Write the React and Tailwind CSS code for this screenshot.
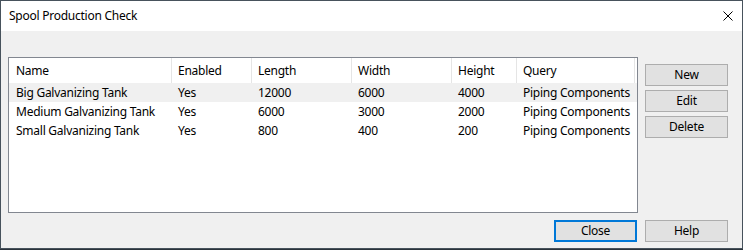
import React from 'react'

const columns = [
  { key: 'name', label: 'Name', width: 'w-[163px]', pad: 'pl-[7px]' },
  { key: 'enabled', label: 'Enabled', width: 'w-[80px]', pad: 'pl-[6px]' },
  { key: 'length', label: 'Length', width: 'w-[100px]', pad: 'pl-[6px]' },
  { key: 'width', label: 'Width', width: 'w-[100px]', pad: 'pl-[6px]' },
  { key: 'height', label: 'Height', width: 'w-[65px]', pad: 'pl-[6px]' },
  { key: 'query', label: 'Query', width: 'w-[118px]', pad: 'pl-[6px]' },
]

const rows = [
  { name: 'Big Galvanizing Tank', enabled: 'Yes', length: '12000', width: '6000', height: '4000', query: 'Piping Components' },
  { name: 'Medium Galvanizing Tank', enabled: 'Yes', length: '6000', width: '3000', height: '2000', query: 'Piping Components' },
  { name: 'Small Galvanizing Tank', enabled: 'Yes', length: '800', width: '400', height: '200', query: 'Piping Components' },
]

const Button = ({ children, isDefault = false }) => (
  <button
    type="button"
    className={`w-[83px] h-[22px] bg-[#e1e1e1] text-[12px] leading-none text-black ${isDefault ? 'border-2 border-[#0078d7]' : 'border border-[#adadad]'}`}
  >
    {children}
  </button>
)

export default function App() {
  return (
    <div className="w-[743px] h-[250px] bg-[#2b333b] font-['Noto_Sans',sans-serif] text-[12px] tracking-[-0.25px] text-black">
      <div className="w-[743px] h-[249px] border border-[#47525c] flex flex-col bg-[#f0f0f0]">
        <div className="h-[30px] bg-white flex items-center justify-between pl-[8px] pr-[9px]">
          <span className="text-[12px]">Spool Production Check</span>
          <svg width="10" height="10" viewBox="0 0 10 10">
            <path d="M0.5 0.5 L9.5 9.5 M9.5 0.5 L0.5 9.5" stroke="#000" strokeWidth="1" />
          </svg>
        </div>

        <div className="flex-1 flex flex-col pl-[7px] pt-[26px]">
          <div className="flex gap-[7px]">
            <div className="w-[630px] h-[156px] border border-[#828790] bg-white">
              <div className="flex h-[25px]">
                {columns.map(col => (
                  <div
                    key={col.key}
                    className={`${col.width} ${col.pad} h-full flex items-center border-r border-[#e5e5e5]`}
                  >
                    {col.label}
                  </div>
                ))}
              </div>
              {rows.map((row, i) => (
                <div
                  key={row.name}
                  className={`flex pt-[1px] ${i === 0 ? 'h-[19px] bg-[#f0f0f0]' : i === 1 ? 'h-[19px]' : 'h-[18px]'}`}
                >
                  {columns.map(col => (
                    <div key={col.key} className={`${col.width} ${col.pad} leading-[18px] whitespace-nowrap`}>
                      {row[col.key]}
                    </div>
                  ))}
                </div>
              ))}
            </div>

            <div className="flex flex-col gap-[4px] pt-[7px]">
              <Button>New</Button>
              <Button>Edit</Button>
              <Button>Delete</Button>
            </div>
          </div>

          <div className="flex justify-end gap-[8px] pr-[14px] pt-[7px]">
            <Button isDefault>Close</Button>
            <Button>Help</Button>
          </div>
        </div>
      </div>
    </div>
  )
}
